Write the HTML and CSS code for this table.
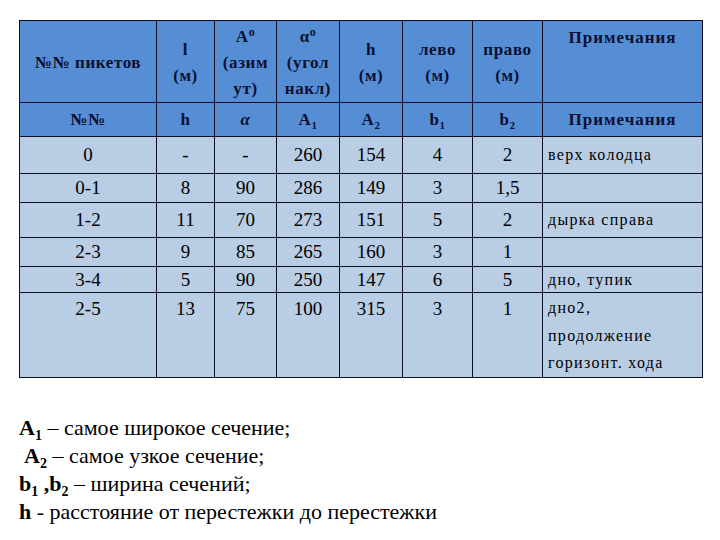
FILE: index.html
```html
<!DOCTYPE html>
<html lang="ru">
<head>
<meta charset="utf-8">
<title>Таблица пикетов</title>
<link rel="stylesheet" href="styles.css">
</head>
<body class="doc">
  <table class="data">
    <colgroup>
      <col class="c1"><col class="c2"><col class="c3"><col class="c4"><col class="c5"><col class="c6"><col class="c7"><col class="c8">
    </colgroup>
    <tr class="h1">
      <th class="hc">№№ пикетов</th>
      <th class="hc">l<br>(м)</th>
      <th class="hc">A<span class="deg">о</span><br>(азим<br>ут)</th>
      <th class="hc">α<span class="deg">о</span><br>(угол<br>накл)</th>
      <th class="hc">h<br>(м)</th>
      <th class="hc">лево<br>(м)</th>
      <th class="hc">право<br>(м)</th>
      <th class="hc top">Примечания</th>
    </tr>
    <tr class="h2">
      <th class="hc">№№</th>
      <th class="hc">h</th>
      <th class="hc alpha">α</th>
      <th class="hc">A<sub class="sb">1</sub></th>
      <th class="hc">A<sub class="sb">2</sub></th>
      <th class="hc">b<sub class="sb">1</sub></th>
      <th class="hc">b<sub class="sb">2</sub></th>
      <th class="hc wide">Примечания</th>
    </tr>
    <tr class="r0">
      <td class="dc">0</td><td class="dc">-</td><td class="dc">-</td><td class="dc">260</td><td class="dc">154</td><td class="dc">4</td><td class="dc">2</td><td class="dc note">верх колодца</td>
    </tr>
    <tr class="r1">
      <td class="dc">0-1</td><td class="dc">8</td><td class="dc">90</td><td class="dc">286</td><td class="dc">149</td><td class="dc">3</td><td class="dc">1,5</td><td class="dc note"></td>
    </tr>
    <tr class="r2">
      <td class="dc">1-2</td><td class="dc">11</td><td class="dc">70</td><td class="dc">273</td><td class="dc">151</td><td class="dc">5</td><td class="dc">2</td><td class="dc note">дырка справа</td>
    </tr>
    <tr class="r3">
      <td class="dc">2-3</td><td class="dc">9</td><td class="dc">85</td><td class="dc">265</td><td class="dc">160</td><td class="dc">3</td><td class="dc">1</td><td class="dc note"></td>
    </tr>
    <tr class="r4">
      <td class="dc">3-4</td><td class="dc">5</td><td class="dc">90</td><td class="dc">250</td><td class="dc">147</td><td class="dc">6</td><td class="dc">5</td><td class="dc note">дно, тупик</td>
    </tr>
    <tr class="r5">
      <td class="dc">2-5</td><td class="dc">13</td><td class="dc">75</td><td class="dc">100</td><td class="dc">315</td><td class="dc">3</td><td class="dc">1</td><td class="dc note multi">дно2,<br>продолжение<br>горизонт. хода</td>
    </tr>
  </table>
  <p class="line first"><b class="key">A<sub class="ls">1</sub></b> – самое широкое сечение;</p>
  <p class="line ind"><b class="key">A<sub class="ls">2</sub></b> – самое узкое сечение;</p>
  <p class="line"><b class="key">b<sub class="ls">1</sub> ,b<sub class="ls">2</sub></b> – ширина сечений;</p>
  <p class="line"><b class="key">h</b> - расстояние от перестежки до перестежки</p>
</body>
</html>
```
FILE: styles.css
```css
body.doc {
  margin: 0;
  padding: 20px 0 0 19px;
  color: #000;
  background: #fff;
  font-family: "Liberation Serif", serif !important;
}
.data {
  border-collapse: collapse;
  table-layout: fixed;
  width: 683px;
  font-family: "Liberation Serif", serif !important;
}
.c1 { width: 137px; }
.c2 { width: 58px; }
.c3 { width: 62px; }
.c4 { width: 63px; }
.c5 { width: 63px; }
.c6 { width: 70px; }
.c7 { width: 70px; }
.c8 { width: 160px; }
.hc {
  border: 1px solid #0c0c24;
  padding: 0;
  text-align: center;
  vertical-align: middle;
  background: #558ed5;
  color: #0b1030;
  font-family: "Liberation Serif", serif !important;
  font-weight: bold;
  font-size: 17px;
  line-height: 20px;
  letter-spacing: 0.6px;
}
.h1 { height: 82px; }
.h1 .hc { line-height: 26px; padding-top: 3px; }
.h1 .top { vertical-align: top; padding-top: 4px; letter-spacing: 1px; }
.h2 { height: 34px; }
.h2 .wide { letter-spacing: 1px; }
.deg {
  font-size: 12px;
  vertical-align: 6px;
  line-height: 0;
  font-family: "Liberation Serif", serif !important;
}
.alpha { font-style: italic; }
.sb {
  font-size: 11px;
  vertical-align: -4px;
  line-height: 0;
  font-family: "Liberation Serif", serif !important;
}
.dc {
  border: 1px solid #0c0c24;
  padding: 0;
  text-align: center;
  vertical-align: middle;
  background: #b9cde5;
  font-family: "Liberation Serif", serif !important;
  font-size: 19px;
  line-height: 22px;
}
.dc.note {
  text-align: left;
  padding-left: 5px;
  font-size: 16px;
  letter-spacing: 1.3px;
}
.r0 { height: 37px; }
.r1 { height: 29px; }
.r2 { height: 35px; }
.r3 { height: 29px; }
.r4 { height: 26px; }
.r5 { height: 83px; }
.r5 .dc { vertical-align: top; padding-top: 5px; }
.dc.multi { line-height: 27.5px; padding-top: 1px; }
.line {
  margin: 0;
  font-family: "Liberation Serif", serif !important;
  font-size: 22px;
  line-height: 28px;
}
.key { font-family: "Liberation Serif", serif !important; }
.first { margin-top: 36px; }
.ind { padding-left: 5px; }
.ls {
  font-size: 14px;
  vertical-align: -5px;
  line-height: 0;
  font-family: "Liberation Serif", serif !important;
}
```
